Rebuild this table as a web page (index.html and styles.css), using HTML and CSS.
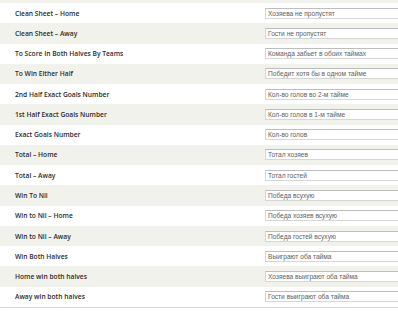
FILE: index.html
```html
<!DOCTYPE html>
<html>
<head>
<meta charset="utf-8">
<link rel="stylesheet" href="styles.css">
</head>
<body>
<div class="table">
  <div class="row alt stub"></div>
  <div class="row"><span class="label">Clean Sheet – Home</span><span class="field">Хозяева не пропустят</span></div>
  <div class="row alt"><span class="label">Clean Sheet – Away</span><span class="field">Гости не пропустят</span></div>
  <div class="row"><span class="label">To Score In Both Halves By Teams</span><span class="field">Команда забьет в обоих таймах</span></div>
  <div class="row alt"><span class="label">To Win Either Half</span><span class="field">Победит хотя бы в одном тайме</span></div>
  <div class="row"><span class="label">2nd Half Exact Goals Number</span><span class="field">Кол-во голов во 2-м тайме</span></div>
  <div class="row alt"><span class="label">1st Half Exact Goals Number</span><span class="field">Кол-во голов в 1-м тайме</span></div>
  <div class="row"><span class="label">Exact Goals Number</span><span class="field">Кол-во голов</span></div>
  <div class="row alt"><span class="label">Total – Home</span><span class="field">Тотал хозяев</span></div>
  <div class="row"><span class="label">Total – Away</span><span class="field">Тотал гостей</span></div>
  <div class="row alt"><span class="label">Win To Nil</span><span class="field">Победа всухую</span></div>
  <div class="row"><span class="label">Win to Nil – Home</span><span class="field">Победа хозяев всухую</span></div>
  <div class="row alt"><span class="label">Win to Nil – Away</span><span class="field">Победа гостей всухую</span></div>
  <div class="row"><span class="label">Win Both Halves</span><span class="field">Выиграют оба тайма</span></div>
  <div class="row alt"><span class="label">Home win both halves</span><span class="field">Хозяева выиграют оба тайма</span></div>
  <div class="row last"><span class="label">Away win both halves</span><span class="field">Гости выиграют оба тайма</span></div>
</div>
</body>
</html>
```
FILE: styles.css
```css
html, body {
  margin: 0;
  padding: 0;
  background: #fff;
  overflow: hidden;
}
.table {
  width: 398px;
  margin-top: -17.27px;
  overflow: hidden;
}
.row {
  height: 20.27px;
  display: flex;
  align-items: center;
  background: #fff;
}
.row.alt {
  background: #f2f2ec;
}
.row.last {
  border-bottom: 1px solid #d8d8d8;
}
.label {
  width: 250px;
  padding-left: 15px;
  font-family: "Open Sans", sans-serif;
  font-weight: 600;
  font-size: 6.7px;
  color: #2a2a2a;
  white-space: nowrap;
}
.field {
  flex: 1;
  height: 11px;
  margin-right: -20px;
  box-sizing: border-box;
  border: 1px solid #d6d6d6;
  border-top-color: #bdbdbd;
  background: #fff;
  padding-left: 2px;
  font-family: "Liberation Sans", Arial, sans-serif;
  font-size: 6.6px;
  line-height: 9px;
  color: #5e5e5e;
  white-space: nowrap;
  overflow: hidden;
}
```
